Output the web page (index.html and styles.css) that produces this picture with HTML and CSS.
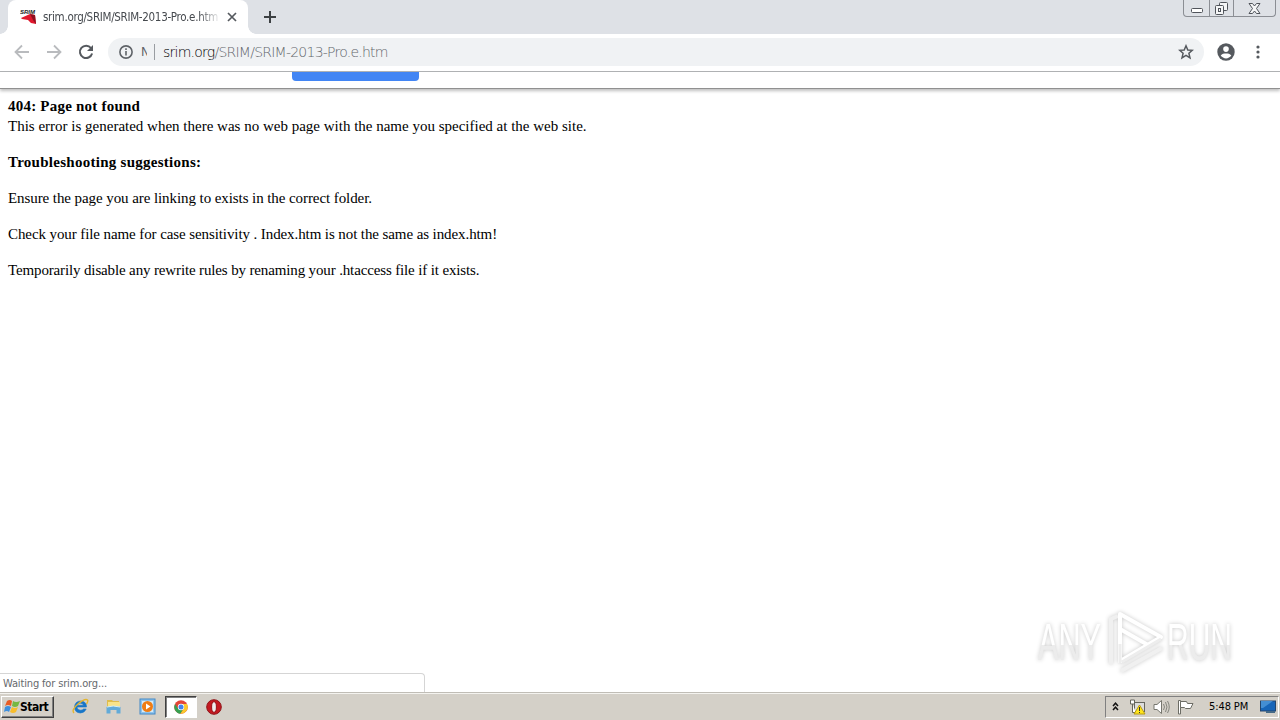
FILE: index.html
```
<!DOCTYPE html>
<html lang="en">
<head>
    <meta charset="UTF-8">
    <title>srim.org/SRIM/SRIM-2013-Pro.e.htm</title>
    <link rel="stylesheet" href="styles.css">
</head>
<body>
    <header class="tabstrip">
        <div class="tab">
            <svg class="favicon" width="17" height="17" viewBox="0 0 17 17">
                <path d="M1 9L10 5L15 6L16 15L11 14L8 11L2 10Z" fill="#e0182d"/>
                <path d="M10 5L15 6L16 15L13 11Z" fill="#8e1020"/>
                <text x="0" y="5" class="favicon-text">SRIM</text>
            </svg>
            <span class="tab-title">srim.org/SRIM/SRIM-2013-Pro.e.htm</span>
            <svg class="tab-close" width="10" height="10" viewBox="0 0 10 10"><path d="M1 1L9 9M9 1L1 9" stroke="#55595e" stroke-width="1.7"/></svg>
        </div>
        <svg class="new-tab" width="12" height="12" viewBox="0 0 12 12"><path d="M6 0V12M0 6H12" stroke="#3c4043" stroke-width="2"/></svg>
        <div class="window-controls">
            <span class="control minimize"><svg width="12" height="5" viewBox="0 0 12 5"><rect x=".5" y=".5" width="11" height="4" rx="1" fill="#fff" stroke="#50545b"/></svg></span>
            <span class="control restore"><svg width="13" height="13" viewBox="0 0 13 13" fill="#f5f6f7" stroke="#50545b"><rect x="4.5" y=".5" width="8" height="8" rx="1"/><rect x=".5" y="3.5" width="8" height="9" rx="1"/><rect x="3.5" y="6.5" width="2" height="3"/></svg></span>
            <span class="control close"><svg width="13" height="11" viewBox="0 0 13 11"><path d="M1 .5H4.5L6.5 3L8.5 .5H12L8.5 5.5L12 10.5H8.5L6.5 8L4.5 10.5H1L4.5 5.5Z" fill="#f5f6f7" stroke="#50545b"/></svg></span>
        </div>
    </header>

    <nav class="toolbar">
        <svg class="nav-icon" width="16" height="16" viewBox="0 0 16 16" fill="none" stroke="#b9bbbe" stroke-width="1.8"><path d="M15 8H2M8 1.5L1.5 8L8 14.5"/></svg>
        <svg class="nav-icon" width="16" height="16" viewBox="0 0 16 16" fill="none" stroke="#b9bbbe" stroke-width="1.8"><path d="M1 8H14M8 1.5L14.5 8L8 14.5"/></svg>
        <svg class="nav-icon" width="16" height="16" viewBox="0 0 16 16"><path d="M13 4A6.2 6.2 0 1 0 14.1 9.5" fill="none" stroke="#55595e" stroke-width="2"/><path d="M15 1V7H9Z" fill="#55595e"/></svg>
        <div class="omnibox">
            <svg width="14" height="14" viewBox="0 0 14 14"><circle cx="7" cy="7" r="6.1" fill="none" stroke="#5f6368" stroke-width="1.6"/><path d="M7 6V10.5M7 3.3V5" stroke="#5f6368" stroke-width="1.6"/></svg>
            <span class="security"><span>N</span></span>
            <span class="url"><b>srim.org</b>/SRIM/SRIM-2013-Pro.e.htm</span>
            <svg class="star" width="16" height="16" viewBox="0 0 16 16"><path d="M8 1.8L9.8 6L14.3 6.3L10.9 9.3L12 13.9L8 11.4L4 13.9L5.1 9.3L1.7 6.3L6.2 6Z" fill="none" stroke="#55595e" stroke-width="1.5"/></svg>
        </div>
        <svg class="profile" width="18" height="18" viewBox="0 0 18 18"><circle cx="9" cy="9" r="8.7" fill="#55595e"/><circle cx="9" cy="6.1" r="2.8" fill="#fff"/><path d="M3.7 12.6C5 10.5 7 10.4 9 10.4S13 10.5 14.3 12.6C13 14.5 11 15.4 9 15.4S5 14.5 3.7 12.6Z" fill="#fff"/></svg>
        <svg class="menu" width="4" height="14" viewBox="0 0 4 14" fill="#55595e"><circle cx="2" cy="2" r="1.6"/><circle cx="2" cy="7" r="1.6"/><circle cx="2" cy="12" r="1.6"/></svg>
    </nav>

    <div class="infobar"><div class="infobar-button"></div></div>

    <main class="page">
        <h1>404: Page not found</h1>
        <p>This error is generated when there was no web page with the name you specified at the web site.</p>
        <h2>Troubleshooting suggestions:</h2>
        <p class="link-hint">Ensure the page you are linking to exists in the correct folder.</p>
        <p class="case-hint">Check your file name for case sensitivity . Index.htm is not the same as index.htm!</p>
        <p class="rewrite-hint">Temporarily disable any rewrite rules by renaming your .htaccess file if it exists.</p>

        <svg class="watermark" width="210" height="76" viewBox="0 0 210 76">
            <defs>
                <linearGradient id="fade" x1="0" y1="0" x2="0" y2="1">
                    <stop offset="0.54" stop-color="#fff"/>
                    <stop offset="0.55" stop-color="#ececec"/>
                </linearGradient>
            </defs>
            <g class="watermark-shape">
                <text x="8" y="58" textLength="63" lengthAdjust="spacingAndGlyphs">ANY</text>
                <text x="137" y="58" textLength="65" lengthAdjust="spacingAndGlyphs">RUN</text>
                <path d="M81 62V17L88 14M91 69L132 46" fill="none" stroke="#f0f0f0" stroke-width="4"/>
                <path d="M90 61V12L131 35L92 58M90 27L118 43" fill="none" stroke="#fff" stroke-width="4" stroke-linejoin="round"/>
                <path d="M90 61V42M131 37L92 60" fill="none" stroke="#ededed" stroke-width="3"/>
            </g>
        </svg>
        <div class="status">Waiting for srim.org...</div>
    </main>

    <footer class="taskbar">
        <div class="start">
            <svg width="17" height="16" viewBox="0 0 17 16">
                <path d="M3 2Q6 0 8 2L7 7Q4 5 1 7Z" fill="#e85c24"/>
                <path d="M9 2Q12 4 16 2L14 7Q11 9 8 7Z" fill="#75b843"/>
                <path d="M1 8Q4 6 7 8L5 13Q3 11 0 13Z" fill="#3e8fdd"/>
                <path d="M8 8Q11 10 14 8L12 13Q9 15 6 13Z" fill="#f8bd2c"/>
            </svg>
            <span>Start</span>
        </div>
        <div class="launcher">
            <span class="task"><svg width="17" height="17" viewBox="0 0 17 17"><path d="M14.5 9H5Q5 12 8.5 12.2Q10.5 12.2 11.5 11H14.2Q12.5 15 8.3 15Q2.5 14.5 2.5 9Q3 3.2 8.7 3Q14.7 3.5 14.5 9ZM5.3 7.2H11.5Q11 5.3 8.5 5.2Q6 5.3 5.3 7.2Z" fill="#1776c8" stroke="#1776c8" stroke-width=".6" fill-rule="evenodd"/><path d="M2 15Q-1 12 6 6Q13 0 15.5 2Q16.5 3 14.5 6" fill="none" stroke="#e4b52d" stroke-width="1.4"/></svg></span>
            <span class="task"><svg width="17" height="17" viewBox="0 0 17 17"><path d="M2 2H7L8 3H14V12H2Z" fill="#dfbc4c"/><path d="M3 4H15V11H3Z" fill="#f8e38a"/><path d="M1.5 9Q8 7 15.5 9V15.5H11.5V12H5.5V15.5H1.5Z" fill="#62aad8"/><path d="M2 9Q8 7 15 9" fill="none" stroke="#d3eef8"/></svg></span>
            <span class="task"><svg width="17" height="17" viewBox="0 0 17 17"><rect x="1" y="1" width="15" height="15" fill="#8fc4ed" stroke="#4388c5"/><rect x="3" y="3" width="11" height="11" fill="#d7ebf7"/><circle cx="8.5" cy="8.5" r="5.5" fill="#ef7d15"/><path d="M7 5.5L11.5 8.5L7 11.5Z" fill="#fff"/></svg></span>
            <span class="task active"><svg width="14" height="14" viewBox="0 0 14 14"><circle cx="7" cy="7" r="6.8" fill="#e44537"/><path d="M1 4A6.8 6.8 0 0 0 6.4 13.8L9.8 8.4L7 7L4 8.5Z" fill="#35a151"/><path d="M7 4H13A6.8 6.8 0 0 1 6.4 13.8L9.8 8.4Z" fill="#fbc92c"/><circle cx="7" cy="7" r="3.2" fill="#fff"/><circle cx="7" cy="7" r="2.5" fill="#4382ed"/></svg></span>
            <span class="task"><svg width="16" height="16" viewBox="0 0 16 16"><circle cx="8" cy="8" r="7.3" fill="#c51921" stroke="#8f1519"/><ellipse cx="8" cy="8" rx="2.4" ry="5.3" fill="#eee" stroke="#951117"/></svg></span>
        </div>
        <div class="tray">
            <svg class="chevrons" width="7" height="9" viewBox="0 0 7 9" fill="none" stroke="#111" stroke-width="1.5"><path d="M1 4L3.5 1.2L6 4M1 8L3.5 5.2L6 8"/></svg>
            <svg class="network" width="17" height="16" viewBox="0 0 17 16"><rect x="5.5" y="3.5" width="10" height="9" fill="#ddd" stroke="#66665e"/><path d="M1.5 1H5.5V5H1.5ZM3.5 5V13.5H7" fill="#fff" stroke="#64645d"/><path d="M10.5 6L16 15H5Z" fill="#ffe51c" stroke="#b89b13"/><path d="M10.5 8V12M10.5 13V14" stroke="#333"/></svg>
            <svg class="speaker" width="17" height="16" viewBox="0 0 17 16"><path d="M1 5.5H4L8.5 1.5V14.5L4 10.5H1Z" fill="#fff" stroke="#77776f"/><path d="M10.5 5Q12.5 8 10.5 11M12.5 3Q15.5 8 12.5 13M14.5 2Q18 8 14.5 14" fill="none" stroke="#85857e"/></svg>
            <svg class="flag" width="17" height="16" viewBox="0 0 17 16"><path d="M1.5 1.5H3.5V15H1.5Z" fill="#fff" stroke="#6c6c65"/><path d="M3.5 2.5H9.5L10.5 4.5H16L13.5 9.5H8.5L7.5 8.5H3.5Z" fill="#fff" stroke="#6c6c65"/></svg>
            <time>5:48 PM</time>
            <svg class="desktop" width="16" height="14" viewBox="0 0 16 14"><rect x=".5" y="1" width="15" height="10" fill="#1765b8" stroke="#24456c"/><path d="M1 1H13L3 8H1Z" fill="#448ed3"/><path d="M6 12H15" stroke="#456986" stroke-width="2"/></svg>
        </div>
    </footer>
</body>
</html>
```
FILE: styles.css
```
* {
    box-sizing: border-box;
}

body {
    margin: 0;
    width: 1280px;
    height: 720px;
    display: flex;
    flex-direction: column;
    overflow: hidden;
    background: #fff;
    font-family: "DejaVu Sans Condensed", "DejaVu Sans", sans-serif;
}

svg {
    display: block;
    flex-shrink: 0;
}

.tabstrip {
    height: 34px;
    padding-left: 8px;
    display: flex;
    background: #dee1e6;
}

.tab {
    width: 240px;
    height: 34px;
    padding: 0 11px 0 12px;
    display: flex;
    align-items: center;
    border-radius: 8px 8px 0 0;
    background: #fff;
    position: relative;
}

.tab::before, .tab::after {
    content: "";
    position: absolute;
    bottom: 0;
    width: 8px;
    height: 8px;
}

.tab::before {
    left: -8px;
    background: radial-gradient(circle at 0 0, #dee1e6 7.5px, #fff 8px);
}

.tab::after {
    right: -8px;
    background: radial-gradient(circle at 100% 0, #dee1e6 7.5px, #fff 8px);
}

.favicon-text {
    font: italic bold 6px "Liberation Sans", sans-serif;
    fill: #222;
}

.tab-title {
    width: 175px;
    margin-left: 6px;
    overflow: hidden;
    white-space: nowrap;
    font-size: 11.5px;
    letter-spacing: -0.3px;
    color: #45494e;
    -webkit-mask-image: linear-gradient(to right, #000 155px, transparent 178px);
    mask-image: linear-gradient(to right, #000 155px, transparent 178px);
}

.tab-close {
    margin-left: auto;
}

.new-tab {
    margin: 11px 0 0 16px;
}

.window-controls {
    width: 93px;
    height: 17px;
    margin: 0 4px 0 auto;
    display: flex;
    border: 1px solid #8b8e94;
    border-top: 0;
    border-radius: 0 0 4px 4px;
}

.control {
    display: flex;
    align-items: center;
    justify-content: center;
}

.minimize {
    width: 25px;
    padding-top: 4px;
}

.restore {
    width: 25px;
    border-left: 1px solid #8b8e94;
    border-right: 1px solid #8b8e94;
}

.close {
    flex: 1;
}

.toolbar {
    height: 38px;
    padding: 0 20px 2px 14px;
    display: flex;
    align-items: center;
    border-bottom: 1px solid #b2b4b6;
}

.nav-icon {
    margin-right: 16px;
}

.omnibox {
    width: 1096px;
    height: 28px;
    margin-left: -2px;
    padding: 0 10px 0 11px;
    display: flex;
    align-items: center;
    border-radius: 14px;
    background: #f0f2f4;
}

.security {
    width: 14px;
    height: 16px;
    margin-left: 8px;
    border-right: 1px solid #999da2;
    line-height: 16px;
    font-size: 13px;
    color: #5f6368;
}

.security span {
    display: block;
    width: 6px;
    overflow: hidden;
}

.url {
    margin-left: 8px;
    font-family: "DejaVu Sans", sans-serif;
    font-weight: 200;
    font-size: 14px;
    letter-spacing: -0.76px;
    color: #62666b;
}

.url b {
    font-weight: 200;
    color: #000;
}

.star {
    margin-left: auto;
}

.profile {
    margin-left: 13px;
}

.menu {
    margin-left: auto;
}

.infobar {
    height: 17px;
    padding-left: 292px;
    border-bottom: 1px solid #909090;
    box-shadow: 0 2px 3px rgba(0, 0, 0, 0.25);
}

.infobar-button {
    width: 127px;
    height: 9px;
    border-radius: 0 0 4px 4px;
    background: #4285f4;
}

.page {
    flex: 1;
    padding: 8px 8px 0;
    position: relative;
    font: 15px/18px "Liberation Serif", serif;
    color: #000;
    white-space: nowrap;
}

.page h1, .page h2, .page p {
    height: 18px;
    margin: 0 0 18px;
    font-size: 15px;
}

.page h1 {
    margin-bottom: 2px;
    letter-spacing: 0.22px;
}

.page h2 {
    letter-spacing: 0.27px;
}

.page .link-hint {
    letter-spacing: -0.08px;
}

.page .case-hint {
    letter-spacing: -0.095px;
}

.page .rewrite-hint {
    letter-spacing: -0.14px;
}

.watermark {
    position: absolute;
    right: 40px;
    bottom: 14px;
}

.watermark-shape {
    filter: drop-shadow(0 0 2px rgba(0, 0, 0, 0.22));
}

.watermark text {
    font: 51px "Liberation Sans", sans-serif;
    fill: url(#fade);
}

.status {
    position: absolute;
    left: 0;
    bottom: 0;
    width: 425px;
    height: 19px;
    padding-left: 3px;
    border: 1px solid #d5d5d5;
    border-left: 0;
    border-bottom: 0;
    border-radius: 0 4px 0 0;
    background: #fff;
    font: 11px/20px "DejaVu Sans Condensed", "DejaVu Sans", sans-serif;
    letter-spacing: -0.15px;
    color: #66696d;
}

.taskbar {
    height: 28px;
    display: flex;
    align-items: center;
    padding: 2px 0 2px 1px;
    border-top: 1px solid #c0bdb6;
    background: #d4d0c8;
    box-shadow: inset 0 1px #f4f3ef;
}

.start {
    width: 53px;
    height: 22px;
    padding-left: 2px;
    display: flex;
    align-items: center;
    border: 1px solid;
    border-color: #fff #404040 #404040 #fff;
    box-shadow: inset -1px -1px #808080;
    font-size: 12px;
    font-weight: bold;
    letter-spacing: -0.5px;
}

.start span {
    margin-left: -1px;
}

.launcher {
    margin-left: 10px;
    display: flex;
    align-items: center;
    gap: 1.5px;
}

.task {
    width: 32px;
    height: 22px;
    display: flex;
    align-items: center;
    justify-content: center;
}

.task.active {
    border: 1px solid;
    border-color: #404040 #fff #fff #404040;
    box-shadow: inset 1px 1px #808080;
    background: #fff;
}

.tray {
    width: 174px;
    height: 22px;
    margin: 0 1px 0 auto;
    padding-left: 6px;
    display: flex;
    align-items: center;
    border: 1px solid;
    border-color: #808080 #fff #fff #808080;
    font-size: 11px;
}

.network {
    margin-left: 10px;
}

.speaker {
    margin-left: 7px;
}

.flag {
    margin-left: 7px;
}

.tray time {
    width: 41px;
    margin-left: 15px;
    white-space: nowrap;
    letter-spacing: -0.1px;
}

.desktop {
    margin-left: 10px;
}
```
